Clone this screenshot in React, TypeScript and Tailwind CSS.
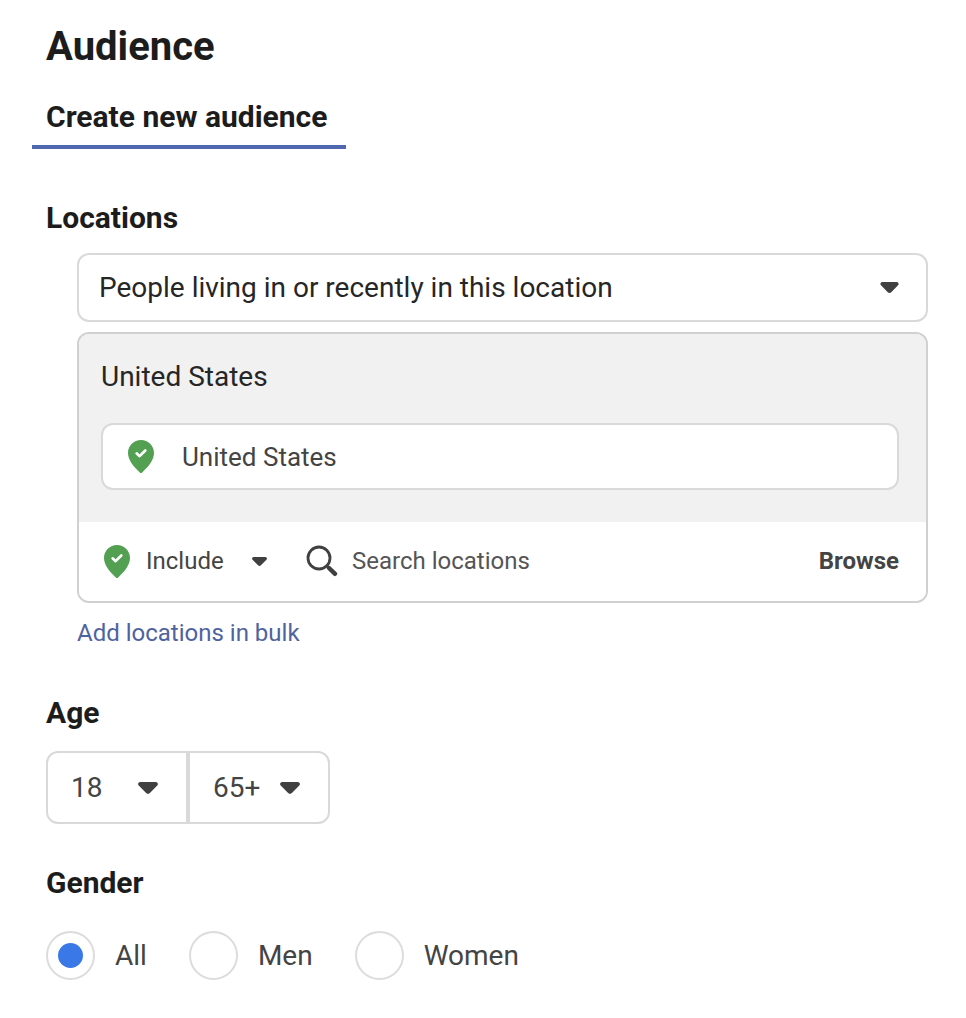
import { useState } from 'react';
import { clsx } from 'clsx';

const GENDERS = ['All', 'Men', 'Women'];
const AGES = Array.from({ length: 47 }, (_, i) => String(i + 18));

function Caret({ className }: { className?: string }) {
  return (
    <svg viewBox="0 0 20 12" className={clsx('pointer-events-none fill-[#404040]', className)} aria-hidden="true">
      <path d="M2.2 0h15.6c1.9 0 2.8 2.2 1.5 3.5l-7.4 7.6c-1.1 1.1-2.7 1.1-3.8 0L.7 3.5C-.6 2.2.3 0 2.2 0z" />
    </svg>
  );
}

function PinIcon() {
  return (
    <svg viewBox="0 0 26 33" className="h-[33px] w-[26px] shrink-0" aria-hidden="true">
      <path
        d="M13 0C5.8 0 0 5.8 0 13c0 7 5.2 13.2 11.8 19.4.7.7 1.7.7 2.4 0C20.8 26.2 26 20 26 13 26 5.8 20.2 0 13 0z"
        fill="#53a053"
      />
      <path d="M8.6 13.3l3 2.9 5.7-5.7" fill="none" stroke="#fff" strokeWidth="2.6" strokeLinecap="round" strokeLinejoin="round" />
    </svg>
  );
}

function SearchIcon() {
  return (
    <svg viewBox="0 0 32 32" className="size-8 shrink-0" fill="none" stroke="#404040" aria-hidden="true">
      <circle cx="13" cy="13" r="11" strokeWidth="2.8" />
      <path d="M21 21l1.5 1.5" strokeWidth="2.8" />
      <path d="M23 23l6 5.8" strokeWidth="4.4" strokeLinecap="round" />
    </svg>
  );
}

interface AgeSelectProps {
  label: string;
  value: string;
  options: string[];
  onChange: (value: string) => void;
  className?: string;
}

function AgeSelect({ label, value, options, onChange, className }: AgeSelectProps) {
  return (
    <div className="grid w-[142px] items-center">
      <select
        aria-label={label}
        value={value}
        onChange={(e) => onChange(e.target.value)}
        className={clsx(
          'col-start-1 row-start-1 h-[73px] w-full appearance-none border-2 border-[#d9d9d9] bg-white pl-[23px] text-[28px] leading-9 text-[#444]',
          className
        )}
      >
        {options.map((o) => (
          <option key={o}>{o}</option>
        ))}
      </select>
      <Caret className="col-start-1 row-start-1 mr-[30px] h-3 w-5 justify-self-end" />
    </div>
  );
}

export default function App() {
  const [minAge, setMinAge] = useState('18');
  const [maxAge, setMaxAge] = useState('65+');
  const [gender, setGender] = useState('All');

  return (
    <main className="min-h-screen bg-white pt-[23px] pr-[38px] pb-8 pl-8 font-['Roboto',sans-serif] text-[#1c1c1c]">
      <h1 className="px-3.5 text-[40px] leading-12 font-bold">Audience</h1>

      <div className="mt-7 flex" role="tablist">
        <button
          type="button"
          role="tab"
          aria-selected="true"
          className="border-b-4 border-[#5068b0] pr-[19px] pb-2.5 pl-3.5 text-[30px] leading-9 font-bold"
        >
          Create new audience
        </button>
      </div>

      {/* Locations */}
      <section className="mt-[51px] pl-3.5">
        <h2 className="text-[30px] leading-9 font-bold">Locations</h2>
        <div className="mt-[17px] pl-[31px]">
          <div className="grid items-center">
            <select
              aria-label="Location type"
              className="col-start-1 row-start-1 h-[69px] w-full appearance-none rounded-xl border-2 border-[#d9d9d9] bg-white pl-5 text-[28px] leading-9 text-[#262626]"
            >
              <option>People living in or recently in this location</option>
              <option>People living in this location</option>
              <option>People recently in this location</option>
            </select>
            <Caret className="col-start-1 row-start-1 mr-[29px] h-[11px] w-[19px] justify-self-end" />
          </div>

          <div className="mt-2.5 overflow-hidden rounded-xl border-2 border-[#d0d0d0]">
            <div className="bg-[#f1f1f1] pt-[25px] pr-[27px] pb-8 pl-[22px]">
              <h3 className="text-[28px] leading-9 text-[#262626]">United States</h3>
              <div className="mt-7 flex h-[67px] items-center gap-7 rounded-xl border-2 border-[#d9d9d9] bg-white px-[25px] text-[26px] leading-9 text-[#444]">
                <PinIcon />
                United States
              </div>
            </div>
            <div className="flex items-center bg-white pt-[21px] pr-[27px] pb-[22px] pl-[25px] text-[24px] leading-9 text-[#444]">
              <PinIcon />
              <div className="ml-4 grid w-[121px] items-center">
                <select aria-label="Include or exclude" className="col-start-1 row-start-1 w-full appearance-none">
                  <option>Include</option>
                  <option>Exclude</option>
                </select>
                <Caret className="col-start-1 row-start-1 h-[9px] w-[15px] justify-self-end" />
              </div>
              <label htmlFor="location-search" className="ml-[39px]">
                <SearchIcon />
              </label>
              <input
                id="location-search"
                type="text"
                aria-label="Search locations"
                placeholder="Search locations"
                className="ml-3.5 min-w-0 flex-1 outline-none placeholder:text-[#555]"
              />
              <button type="button" className="font-bold">
                Browse
              </button>
            </div>
          </div>

          <a href="#bulk" className="mt-3 block w-fit text-[24px] leading-9 text-[#4f639f]">
            Add locations in bulk
          </a>
        </div>
      </section>

      {/* Age */}
      <section className="mt-11 pl-3.5">
        <h2 className="text-[30px] leading-9 font-bold">Age</h2>
        <div className="mt-5 flex">
          <AgeSelect label="Minimum age" value={minAge} options={AGES} onChange={setMinAge} className="rounded-l-xl" />
          <AgeSelect label="Maximum age" value={maxAge} options={[...AGES, '65+']} onChange={setMaxAge} className="rounded-r-xl" />
        </div>
      </section>

      {/* Gender */}
      <fieldset className="mt-[41px] pl-3.5">
        <legend className="text-[30px] leading-9 font-bold">Gender</legend>
        <div className="mt-[30px] flex gap-[42px]">
          {GENDERS.map((g) => (
            <label key={g} className="flex items-center gap-5 text-[28px] leading-9 text-[#444]">
              <input
                type="radio"
                name="gender"
                value={g}
                checked={gender === g}
                onChange={() => setGender(g)}
                className="grid size-[49px] appearance-none place-items-center rounded-full border-2 border-[#dcdcdc] before:size-[25px] before:rounded-full checked:before:bg-[#3b78e7]"
              />
              {g}
            </label>
          ))}
        </div>
      </fieldset>
    </main>
  );
}
